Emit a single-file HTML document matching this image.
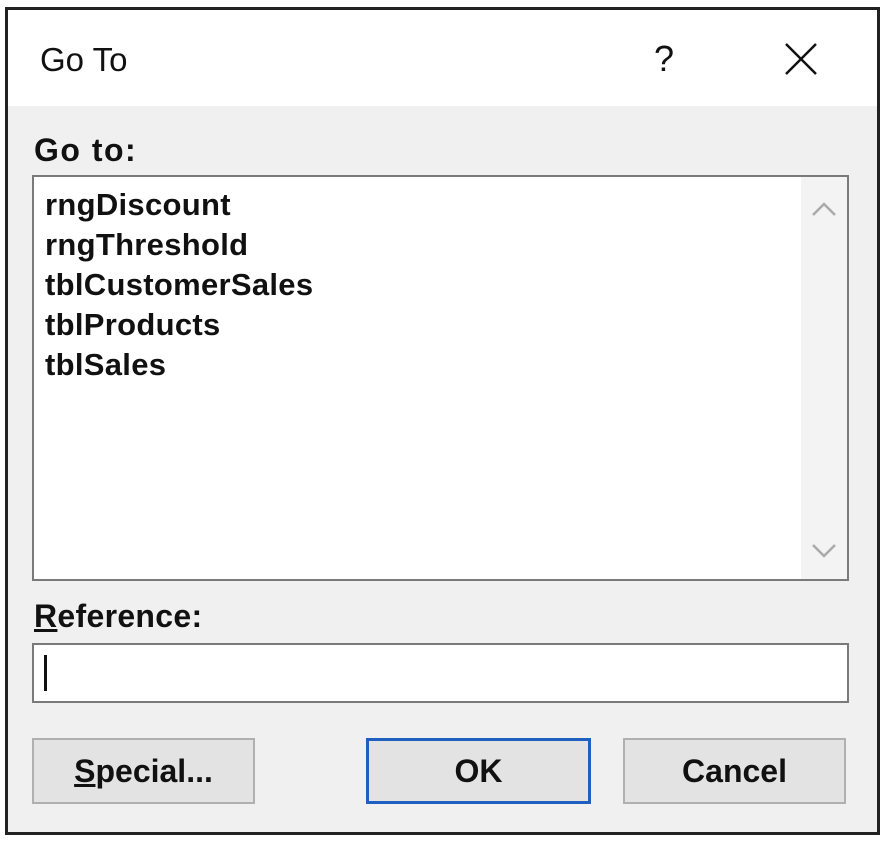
<!DOCTYPE html>
<html><head><style>
body{margin:0;width:885px;height:843px;background:#fff;position:relative;font-family:"Liberation Sans",sans-serif;color:#111;overflow:hidden}
.dlg{position:absolute;left:5px;top:7px;width:869px;height:822px;border:3px solid #222;background:#f0f0f0}
.title{position:absolute;left:0;top:0;width:869px;height:96px;background:#fff}
.t{position:absolute;font-size:32px}
.box{position:absolute;background:#fff;border:2px solid #7a7a7a}
.sb{position:absolute;right:0;top:0;width:46px;bottom:0;background:#f3f3f3}
.btn{position:absolute;top:728px;height:62px;background:#e3e3e3;border:2px solid #b0b0b0;font-size:32px;text-align:center;line-height:62px;font-weight:bold}
</style></head><body>
<div class="dlg">
 <div class="title">
  <div class="t" style="left:32px;top:31px;font-size:33px">Go To</div>
  <div class="t" style="left:646px;top:28px;font-size:36px">?</div>
  <svg style="position:absolute;left:776px;top:32px" width="34" height="34"><path d="M2 2L32 32M32 2L2 32" stroke="#111" stroke-width="2.5"/></svg>
 </div>
 <div class="t" style="left:26px;top:122px;font-weight:bold;letter-spacing:1.5px">Go to:</div>
 <div class="box" style="left:24px;top:165px;width:813px;height:402px">
  <div class="sb">
   <svg style="position:absolute;left:10px;top:24px" width="26" height="16"><path d="M2 14L13 3L24 14" stroke="#aaa" stroke-width="2.5" fill="none"/></svg>
   <svg style="position:absolute;left:10px;top:366px" width="26" height="16"><path d="M2 2L13 13L24 2" stroke="#aaa" stroke-width="2.5" fill="none"/></svg>
  </div>
  <div style="position:absolute;left:11px;top:8px;font-size:31px;line-height:40px;font-weight:bold;letter-spacing:0.3px">rngDiscount<br>rngThreshold<br>tblCustomerSales<br>tblProducts<br>tblSales</div>
 </div>
 <div class="t" style="left:26px;top:588px;font-weight:bold;letter-spacing:0.3px"><u>R</u>eference:</div>
 <div class="box" style="left:24px;top:633px;width:813px;height:56px">
  <div style="position:absolute;left:10px;top:10px;width:3px;height:36px;background:#111"></div>
 </div>
 <div class="btn" style="left:24px;width:219px"><u>S</u>pecial...</div>
 <div class="btn" style="left:358px;width:219px;border:3px solid #1f5fbf;height:60px;line-height:60px">OK</div>
 <div class="btn" style="left:615px;width:219px">Cancel</div>
</div>
</body></html>
